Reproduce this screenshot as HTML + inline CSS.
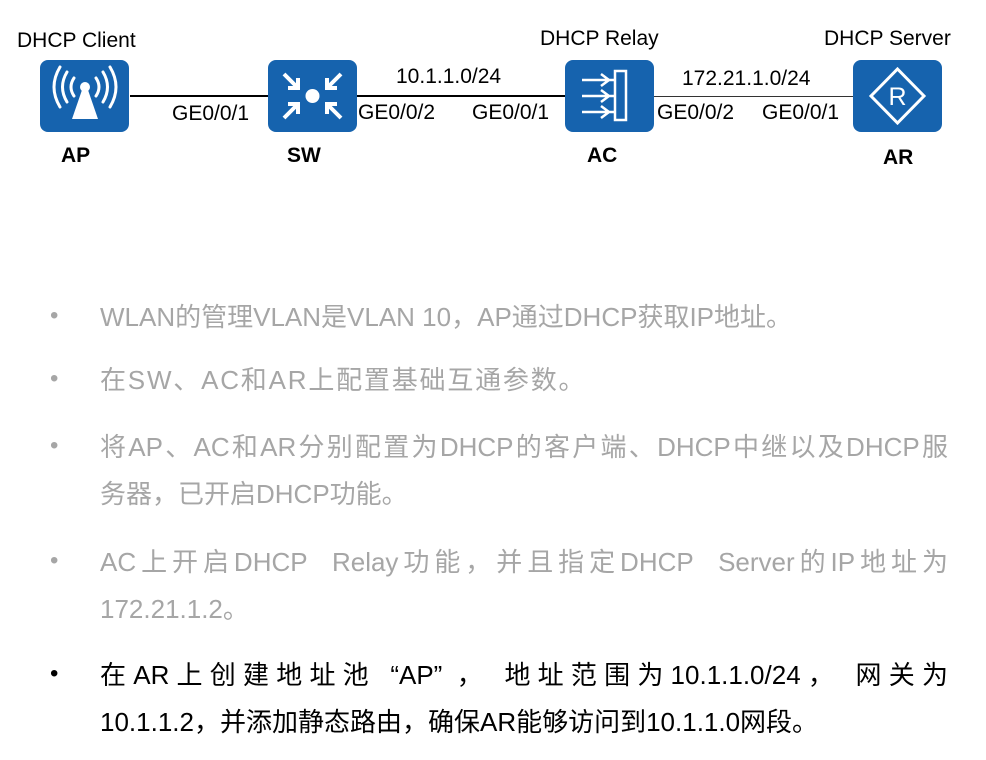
<!DOCTYPE html>
<html><head><meta charset="utf-8"><style>
body{margin:0;width:986px;height:760px;background:#fff;position:relative;overflow:hidden;font-family:"Liberation Sans","Noto Sans CJK SC",sans-serif}
.a{position:absolute;white-space:nowrap}
.l{font-size:21px;color:#000}
.b{font-size:21px;font-weight:bold;color:#000}
.ic{position:absolute;width:89px;height:72px;background:#1663ae;border-radius:8px}
.t{position:absolute;left:100px;font-size:26px;line-height:47px;color:#a6a6a6;width:848px;white-space:nowrap}
.j{text-align:justify;text-align-last:justify}
.d{position:absolute;left:50px;font-size:24px;color:#a6a6a6}
.k{color:#000}
</style></head><body>
<div class="a" style="left:130px;top:95px;width:138px;height:2px;background:#000"></div>
<div class="a" style="left:356px;top:95px;width:209px;height:2px;background:#000"></div>
<div class="a" style="left:653px;top:96px;width:200px;height:1px;background:#333"></div>

<div class="a l" style="left:17px;top:29px">DHCP Client</div>
<div class="a l" style="left:540px;top:27px">DHCP Relay</div>
<div class="a l" style="left:824px;top:27px">DHCP Server</div>
<div class="a l" style="left:396px;top:65px">10.1.1.0/24</div>
<div class="a l" style="left:682px;top:67px">172.21.1.0/24</div>
<div class="a l" style="left:172px;top:102px">GE0/0/1</div>
<div class="a l" style="left:358px;top:101px">GE0/0/2</div>
<div class="a l" style="left:472px;top:101px">GE0/0/1</div>
<div class="a l" style="left:657px;top:101px">GE0/0/2</div>
<div class="a l" style="left:762px;top:101px">GE0/0/1</div>
<div class="a b" style="left:61px;top:144px">AP</div>
<div class="a b" style="left:287px;top:144px">SW</div>
<div class="a b" style="left:587px;top:144px">AC</div>
<div class="a b" style="left:883px;top:146px">AR</div>

<div class="ic" style="left:40px;top:60px"><svg width="89" height="72" fill="none" stroke="#fff" stroke-width="3" stroke-linecap="round">
<circle cx="45" cy="27" r="5" fill="#fff" stroke="none"/><path d="M42 30 L32 59 H58 L48 30Z" fill="#fff" stroke="none"/>
<path d="M34 18 Q28 27 34 36M56 18 Q62 27 56 36M27 12 Q18 27 27 42M63 12 Q72 27 63 42M20 7 Q8 27 20 47M70 7 Q82 27 70 47"/></svg></div>
<div class="ic" style="left:268px;top:60px"><svg width="89" height="72" fill="none" stroke="#fff" stroke-width="4">
<circle cx="44.5" cy="36" r="7" fill="#fff" stroke="none"/>
<path d="M16 14L30 28M30 18V28H20M73 14L59 28M59 18V28H69M16 58L30 44M30 54V44H20M73 58L59 44M59 54V44H69"/></svg></div>
<div class="ic" style="left:565px;top:60px"><svg width="89" height="72" fill="none" stroke="#fff" stroke-width="2.5">
<rect x="50" y="11" width="11" height="49"/><path d="M17 20H44M17 36H44M17 52H44M36 14L44 20L36 26M36 30L44 36L36 42M36 46L44 52L36 58M44 20H50M44 36H50M44 52H50"/></svg></div>
<div class="ic" style="left:853px;top:60px"><svg width="89" height="72" fill="none" stroke="#fff" stroke-width="3">
<path d="M44.5 9L71 36L44.5 63L18 36Z"/><text x="44.5" y="45" text-anchor="middle" fill="#fff" stroke="none" font-size="25" font-family="Liberation Sans">R</text></svg></div>

<div class="d" style="top:302px">•</div><div class="t" style="top:294px">WLAN的管理VLAN是VLAN 10，AP通过DHCP获取IP地址。</div>
<div class="d" style="top:365px">•</div><div class="t" style="top:357px;letter-spacing:1.8px">在SW、AC和AR上配置基础互通参数。</div>
<div class="d" style="top:432px">•</div><div class="t j" style="top:424px">将AP、AC和AR分别配置为DHCP的客户端、DHCP中继以及DHCP服</div>
<div class="t" style="top:471px">务器，已开启DHCP功能。</div>
<div class="d" style="top:547px">•</div><div class="t j" style="top:539px">AC上开启DHCP&nbsp;&nbsp;Relay功能，并且指定DHCP&nbsp;&nbsp;Server的IP地址为</div>
<div class="t" style="top:586px">172.21.1.2。</div>
<div class="d k" style="top:660px">•</div><div class="t k j" style="top:652px">在AR上创建地址池 “AP” ， 地址范围为10.1.1.0/24， 网关为</div>
<div class="t k" style="top:699px">10.1.1.2，并添加静态路由，确保AR能够访问到10.1.1.0网段。</div>
</body></html>
